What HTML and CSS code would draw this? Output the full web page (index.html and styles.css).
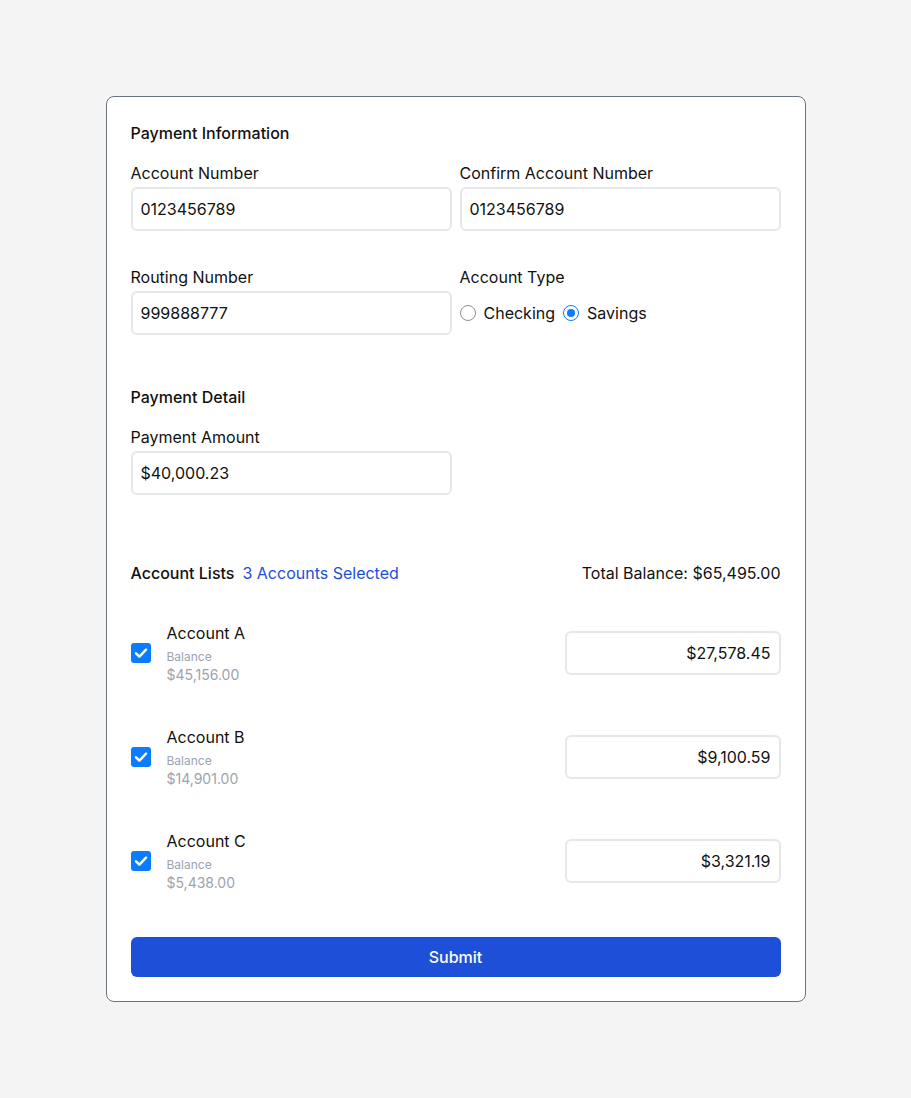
FILE: index.html
```html
<!DOCTYPE html>
<html>
<head>
<meta charset="utf-8">
<link rel="stylesheet" href="styles.css">
</head>
<body>
<div class="card">
  <div class="section-title">Payment Information</div>
  <div class="grid">
    <div class="field">
      <div class="label">Account Number</div>
      <div class="input">0123456789</div>
    </div>
    <div class="field">
      <div class="label">Confirm Account Number</div>
      <div class="input">0123456789</div>
    </div>
    <div class="field">
      <div class="label">Routing Number</div>
      <div class="input">999888777</div>
    </div>
    <div class="field">
      <div class="label">Account Type</div>
      <div class="radios">
        <span class="radio"></span><span class="radio-text">Checking</span>
        <span class="radio checked"></span><span class="radio-text">Savings</span>
      </div>
    </div>
  </div>

  <div class="section-title detail">Payment Detail</div>
  <div class="grid one">
    <div class="field">
      <div class="label">Payment Amount</div>
      <div class="input">$40,000.23</div>
    </div>
  </div>

  <div class="list-head">
    <div class="list-left"><span class="section-title inline">Account Lists</span><span class="selected">3 Accounts Selected</span></div>
    <div class="total">Total Balance: $65,495.00</div>
  </div>

  <div class="accounts">
    <div class="account">
      <span class="check"><svg viewBox="0 0 20 20" width="20" height="20"><path d="M5 10.3 L8.4 13.6 L15 6.6" fill="none" stroke="#fff" stroke-width="2.4" stroke-linecap="round" stroke-linejoin="round"/></svg></span>
      <div class="acc-info">
        <div class="acc-name">Account A</div>
        <div class="acc-bal-label">Balance</div>
        <div class="acc-bal">$45,156.00</div>
      </div>
      <div class="input amount">$27,578.45</div>
    </div>
    <div class="account">
      <span class="check"><svg viewBox="0 0 20 20" width="20" height="20"><path d="M5 10.3 L8.4 13.6 L15 6.6" fill="none" stroke="#fff" stroke-width="2.4" stroke-linecap="round" stroke-linejoin="round"/></svg></span>
      <div class="acc-info">
        <div class="acc-name">Account B</div>
        <div class="acc-bal-label">Balance</div>
        <div class="acc-bal">$14,901.00</div>
      </div>
      <div class="input amount">$9,100.59</div>
    </div>
    <div class="account">
      <span class="check"><svg viewBox="0 0 20 20" width="20" height="20"><path d="M5 10.3 L8.4 13.6 L15 6.6" fill="none" stroke="#fff" stroke-width="2.4" stroke-linecap="round" stroke-linejoin="round"/></svg></span>
      <div class="acc-info">
        <div class="acc-name">Account C</div>
        <div class="acc-bal-label">Balance</div>
        <div class="acc-bal">$5,438.00</div>
      </div>
      <div class="input amount">$3,321.19</div>
    </div>
  </div>

  <button class="submit">Submit</button>
</div>
</body>
</html>
```

FILE: styles.css
```css
* { box-sizing: border-box; }
html, body { margin: 0; padding: 0; }
body {
  background: #f4f4f4;
  font-family: Inter, "Liberation Sans", sans-serif;
  color: #111;
  padding-top: 96px;
}
.card {
  width: 700px;
  margin: 0 auto;
  background: #fff;
  border: 1px solid #6b7280;
  border-radius: 8px;
  padding: 24px;
  display: flex;
  flex-direction: column;
}
.section-title {
  font-size: 16px;
  font-weight: 500;
  line-height: 24px;
  color: #111;
}
.section-title.detail { margin-top: 50px; }
.grid {
  margin-top: 16px;
  display: grid;
  grid-template-columns: 1fr 1fr;
  column-gap: 8px;
  row-gap: 34px;
}
.grid.one { margin-top: 16px; }
.field { display: flex; flex-direction: column; gap: 2px; }
.label { font-size: 16px; line-height: 24px; }
.input {
  height: 44px;
  border: 2px solid #e5e7eb;
  border-radius: 6px;
  padding: 0 8px;
  display: flex;
  align-items: center;
  font-size: 16px;
  color: #111;
}
.radios {
  height: 44px;
  display: flex;
  align-items: center;
  font-size: 16px;
}
.radio {
  width: 16px;
  height: 16px;
  border-radius: 50%;
  border: 1.5px solid #8e8e93;
  margin-right: 8px;
  flex: none;
  position: relative;
}
.radio.checked {
  border: 1.5px solid #0a7cff;
}
.radio.checked::after {
  content: "";
  position: absolute;
  left: 2.5px; top: 2.5px;
  width: 8px; height: 8px;
  border-radius: 50%;
  background: #0a7cff;
}
.radio-text { margin-right: 8px; }
.list-head {
  margin-top: 66px;
  display: flex;
  justify-content: space-between;
  align-items: center;
  line-height: 24px;
}
.list-left { display: flex; align-items: center; gap: 8px; }
.selected { color: #1d4ed8; font-size: 16px; }
.total { font-size: 16px; }
.accounts {
  margin-top: 36px;
  display: flex;
  flex-direction: column;
  gap: 40px;
}
.account {
  display: flex;
  align-items: center;
  height: 64px;
}
.check {
  width: 20px; height: 20px;
  border-radius: 3px;
  background: #0a7cff;
  flex: none;
  margin-right: 16px;
  display: flex;
}
.acc-info { flex: 1; display: flex; flex-direction: column; align-self: flex-start; }
.acc-name { font-size: 16px; line-height: 24px; margin-bottom: 4px; }
.acc-bal-label { font-size: 12px; line-height: 16px; color: #9ca3af; }
.acc-bal { font-size: 14px; line-height: 20px; color: #9ca3af; }
.input.amount {
  width: 216px;
  justify-content: flex-end;
  align-self: flex-start;
  margin-top: 10px;
}
.submit {
  margin-top: 44px;
  height: 40px;
  border: none;
  border-radius: 6px;
  background: #1d4fd8;
  color: #fff;
  font-family: Inter, "Liberation Sans", sans-serif;
  font-size: 16px;
  font-weight: 500;
}
```
